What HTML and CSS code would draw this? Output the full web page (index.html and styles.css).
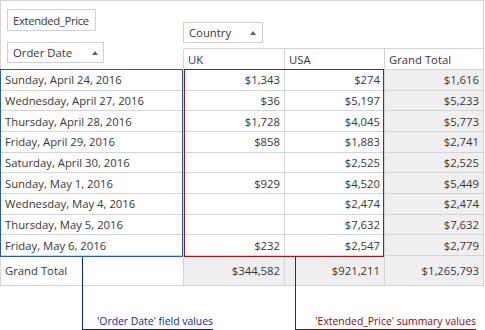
FILE: index.html
```html
<!DOCTYPE html>
<html>
<head>
<meta charset="utf-8">
<link rel="stylesheet" href="styles.css">
</head>
<body>
<div class="stage">
  <div class="pivot">
    <div class="corner">
      <div class="btn btn-data">Extended_Price</div>
      <div class="btn btn-row"><span>Order Date</span><span class="arrow"></span></div>
    </div>
    <div class="col-area">
      <div class="btn btn-col"><span>Country</span><span class="arrow"></span></div>
    </div>
    <div class="hdr first">UK</div>
    <div class="hdr">USA</div>
    <div class="hdr last">Grand Total</div>

    <div class="rh">Sunday, April 24, 2016</div><div class="c">$1,343</div><div class="c">$274</div><div class="c gt">$1,616</div>
    <div class="rh">Wednesday, April 27, 2016</div><div class="c">$36</div><div class="c">$5,197</div><div class="c gt">$5,233</div>
    <div class="rh">Thursday, April 28, 2016</div><div class="c">$1,728</div><div class="c">$4,045</div><div class="c gt">$5,773</div>
    <div class="rh">Friday, April 29, 2016</div><div class="c">$858</div><div class="c">$1,883</div><div class="c gt">$2,741</div>
    <div class="rh">Saturday, April 30, 2016</div><div class="c"></div><div class="c">$2,525</div><div class="c gt">$2,525</div>
    <div class="rh">Sunday, May 1, 2016</div><div class="c">$929</div><div class="c">$4,520</div><div class="c gt">$5,449</div>
    <div class="rh">Wednesday, May 4, 2016</div><div class="c"></div><div class="c">$2,474</div><div class="c gt">$2,474</div>
    <div class="rh">Thursday, May 5, 2016</div><div class="c"></div><div class="c">$7,632</div><div class="c gt">$7,632</div>
    <div class="rh">Friday, May 6, 2016</div><div class="c">$232</div><div class="c">$2,547</div><div class="c gt">$2,779</div>

    <div class="rh total">Grand Total</div><div class="c total">$344,582</div><div class="c total">$921,211</div><div class="c total gt">$1,265,793</div>
  </div>

  <div class="box box-blue"></div>
  <div class="box box-red"></div>

  <div class="callout callout-blue"><span>'Order Date' field values</span></div>
  <div class="callout callout-red"><span>'Extended_Price' summary values</span></div>
</div>
</body>
</html>
```

FILE: styles.css
```css
* { box-sizing: border-box; }
html, body { margin: 0; padding: 0; background: #ffffff; }
body {
  font-family: "Open Sans", "Liberation Sans", sans-serif;
  font-size: 11.3px;
  color: #383838;
}
.stage { position: relative; width: 485px; height: 330px; }

.pivot {
  width: 484px;
  height: 286px;
  border: 1px solid #d4d4d4;
  display: grid;
  grid-template-columns: 183px 101px 100px 98px;
  grid-template-rows: 48px 21px repeat(9, 20.667px) 29px;
}

.corner {
  grid-column: 1;
  grid-row: 1 / 3;
  border-bottom: 1px solid #d4d4d4;
  padding: 8px 0 0 6px;
  display: flex;
  flex-direction: column;
  align-items: flex-start;
}
.btn {
  background: #fff;
  border: 1px solid #d0d0d0;
  display: flex;
  align-items: center;
  justify-content: space-between;
  padding: 0 5px;
  white-space: nowrap;
}
.btn-data { height: 22px; width: 89px; letter-spacing: -0.35px; }
.btn-row { height: 21px; width: 97px; margin-top: 11px; }
.btn-col { height: 21px; width: 80px; margin-left: -1px; margin-top: 21px; padding-right: 6px; }
.arrow {
  width: 0; height: 0;
  border-left: 3.5px solid transparent;
  border-right: 3.5px solid transparent;
  border-bottom: 4px solid #5f5f5f;
}

.col-area {
  grid-column: 2 / 5;
  grid-row: 1;
  border-bottom: 1px solid #d4d4d4;
}

.hdr {
  border-right: 1px solid #d4d4d4;
  border-bottom: 1px solid #d4d4d4;
  padding-left: 4px;
  display: flex;
  align-items: center;
  white-space: nowrap;
}
.hdr.first { box-shadow: -1px 0 0 #d4d4d4; }
.hdr.last { border-right: none; }

.rh, .c {
  border-bottom: 1px solid #d4d4d4;
  border-right: 1px solid #d4d4d4;
  display: flex;
  align-items: center;
  white-space: nowrap;
}
.rh { padding-left: 4px; }
.c { justify-content: flex-end; padding-right: 4px; }
.c.gt { border-right: none; background: #efefef; }
.total { border-bottom: none; }
.c.total { background: #efefef; }

.box { position: absolute; border: 1px solid; pointer-events: none; }
.box-blue { left: 0; top: 69px; width: 183px; height: 188px; border-color: #2a5ca8; }
.box-red { left: 184px; top: 69px; width: 200px; height: 188px; border-color: #a31515; }

.callout {
  position: absolute;
  top: 257px;
  height: 73px;
  border-left: 1px solid;
  border-bottom: 1px solid;
  display: flex;
  align-items: flex-end;
  justify-content: flex-end;
  font-size: 10.4px;
  line-height: 14px;
  padding-bottom: 1px;
  white-space: nowrap;
}
.callout-blue { left: 82px; width: 131px; border-color: #0c22b4; color: #0c22b4; }
.callout-red { left: 295px; width: 181px; border-color: #a00000; color: #a00000; }
```
